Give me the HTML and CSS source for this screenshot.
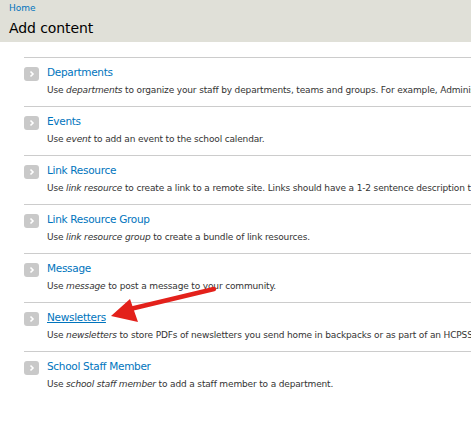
FILE: index.html
```html
<!DOCTYPE html>
<html>
<head>
<meta charset="utf-8">
<link rel="stylesheet" href="styles.css">
</head>
<body>
<div class="header">
  <a class="crumb" href="#">Home</a>
  <h1 class="title">Add content</h1>
</div>
<div class="page">
  <ul class="list">
    <li class="item">
      <div class="row"><span class="ico"><svg width="15" height="14" viewBox="0 0 15 14"><rect width="15" height="14" rx="3" fill="#c9c9c9"/><path d="M6.5 4.5 L9 7 L6.5 9.5" fill="none" stroke="#fff" stroke-width="1.6"/></svg></span><a class="name" href="#">Departments</a></div>
      <div class="desc">Use <em>departments</em> to organize your staff by departments, teams and groups. For example, Administration, Guidance, Special Education.</div>
    </li>
    <li class="item">
      <div class="row"><span class="ico"><svg width="15" height="14" viewBox="0 0 15 14"><rect width="15" height="14" rx="3" fill="#c9c9c9"/><path d="M6.5 4.5 L9 7 L6.5 9.5" fill="none" stroke="#fff" stroke-width="1.6"/></svg></span><a class="name" href="#">Events</a></div>
      <div class="desc">Use <em>event</em> to add an event to the school calendar.</div>
    </li>
    <li class="item">
      <div class="row"><span class="ico"><svg width="15" height="14" viewBox="0 0 15 14"><rect width="15" height="14" rx="3" fill="#c9c9c9"/><path d="M6.5 4.5 L9 7 L6.5 9.5" fill="none" stroke="#fff" stroke-width="1.6"/></svg></span><a class="name" href="#">Link Resource</a></div>
      <div class="desc">Use <em>link resource</em> to create a link to a remote site. Links should have a 1-2 sentence description that explains the resource.</div>
    </li>
    <li class="item">
      <div class="row"><span class="ico"><svg width="15" height="14" viewBox="0 0 15 14"><rect width="15" height="14" rx="3" fill="#c9c9c9"/><path d="M6.5 4.5 L9 7 L6.5 9.5" fill="none" stroke="#fff" stroke-width="1.6"/></svg></span><a class="name" href="#">Link Resource Group</a></div>
      <div class="desc">Use <em>link resource group</em> to create a bundle of link resources.</div>
    </li>
    <li class="item">
      <div class="row"><span class="ico"><svg width="15" height="14" viewBox="0 0 15 14"><rect width="15" height="14" rx="3" fill="#c9c9c9"/><path d="M6.5 4.5 L9 7 L6.5 9.5" fill="none" stroke="#fff" stroke-width="1.6"/></svg></span><a class="name" href="#">Message</a></div>
      <div class="desc">Use <em>message</em> to post a message to your community.</div>
    </li>
    <li class="item">
      <div class="row"><span class="ico"><svg width="15" height="14" viewBox="0 0 15 14"><rect width="15" height="14" rx="3" fill="#c9c9c9"/><path d="M6.5 4.5 L9 7 L6.5 9.5" fill="none" stroke="#fff" stroke-width="1.6"/></svg></span><a class="name hover" href="#">Newsletters</a></div>
      <div class="desc">Use <em>newsletters</em> to store PDFs of newsletters you send home in backpacks or as part of an HCPSS News mailing.</div>
    </li>
    <li class="item">
      <div class="row"><span class="ico"><svg width="15" height="14" viewBox="0 0 15 14"><rect width="15" height="14" rx="3" fill="#c9c9c9"/><path d="M6.5 4.5 L9 7 L6.5 9.5" fill="none" stroke="#fff" stroke-width="1.6"/></svg></span><a class="name" href="#">School Staff Member</a></div>
      <div class="desc">Use <em>school staff member</em> to add a staff member to a department.</div>
    </li>
  </ul>
</div>
<svg class="arrow" width="471" height="430" viewBox="0 0 471 430">
  <path d="M214 289 L126 310" stroke="#e3211b" stroke-width="4.5" stroke-linecap="round" fill="none"/>
  <path d="M111 316 L130 299 L138 322 Z" fill="#e3211b"/>
</svg>
</body>
</html>
```
FILE: styles.css
```css
html, body {
  margin: 0;
  padding: 0;
  background: #fff;
  overflow: hidden;
  width: 471px;
  height: 430px;
  font-family: "DejaVu Sans", Verdana, sans-serif;
  color: #333;
}
.header {
  background: #e0e0d8;
  height: 42px;
  padding: 2px 9px 0;
  box-sizing: border-box;
}
.crumb {
  display: block;
  font-size: 9px;
  line-height: 12px;
  color: #0074bd;
  text-decoration: none;
}
.title {
  margin: 4px 0 0;
  font-size: 14px;
  line-height: 20px;
  font-weight: normal;
  color: #000;
  letter-spacing: -0.1px;
}
.page {
  padding: 15px 0 0 24px;
}
.list {
  list-style: none;
  margin: 0;
  padding: 0;
  width: 600px;
}
.item {
  border-top: 1px solid #cccccc;
  padding: 7px 0 10px;
  height: 31px;
}
.row {
  display: flex;
  align-items: center;
  height: 14px;
}
.ico {
  display: block;
  width: 15px;
  height: 14px;
  margin: 3px 8px 0 0;
}
.ico svg { display: block; }
.name {
  font-size: 10.5px;
  line-height: 14px;
  color: #0074bd;
  text-decoration: none;
  letter-spacing: -0.3px;
}
.name.hover { text-decoration: underline; }
.desc {
  margin: 5px 0 0 23px;
  font-size: 9px;
  line-height: 12px;
  white-space: nowrap;
  color: #333;
  letter-spacing: -0.15px;
}
.desc em { font-style: italic; }
.arrow {
  position: absolute;
  left: 0;
  top: 0;
  pointer-events: none;
}
```
